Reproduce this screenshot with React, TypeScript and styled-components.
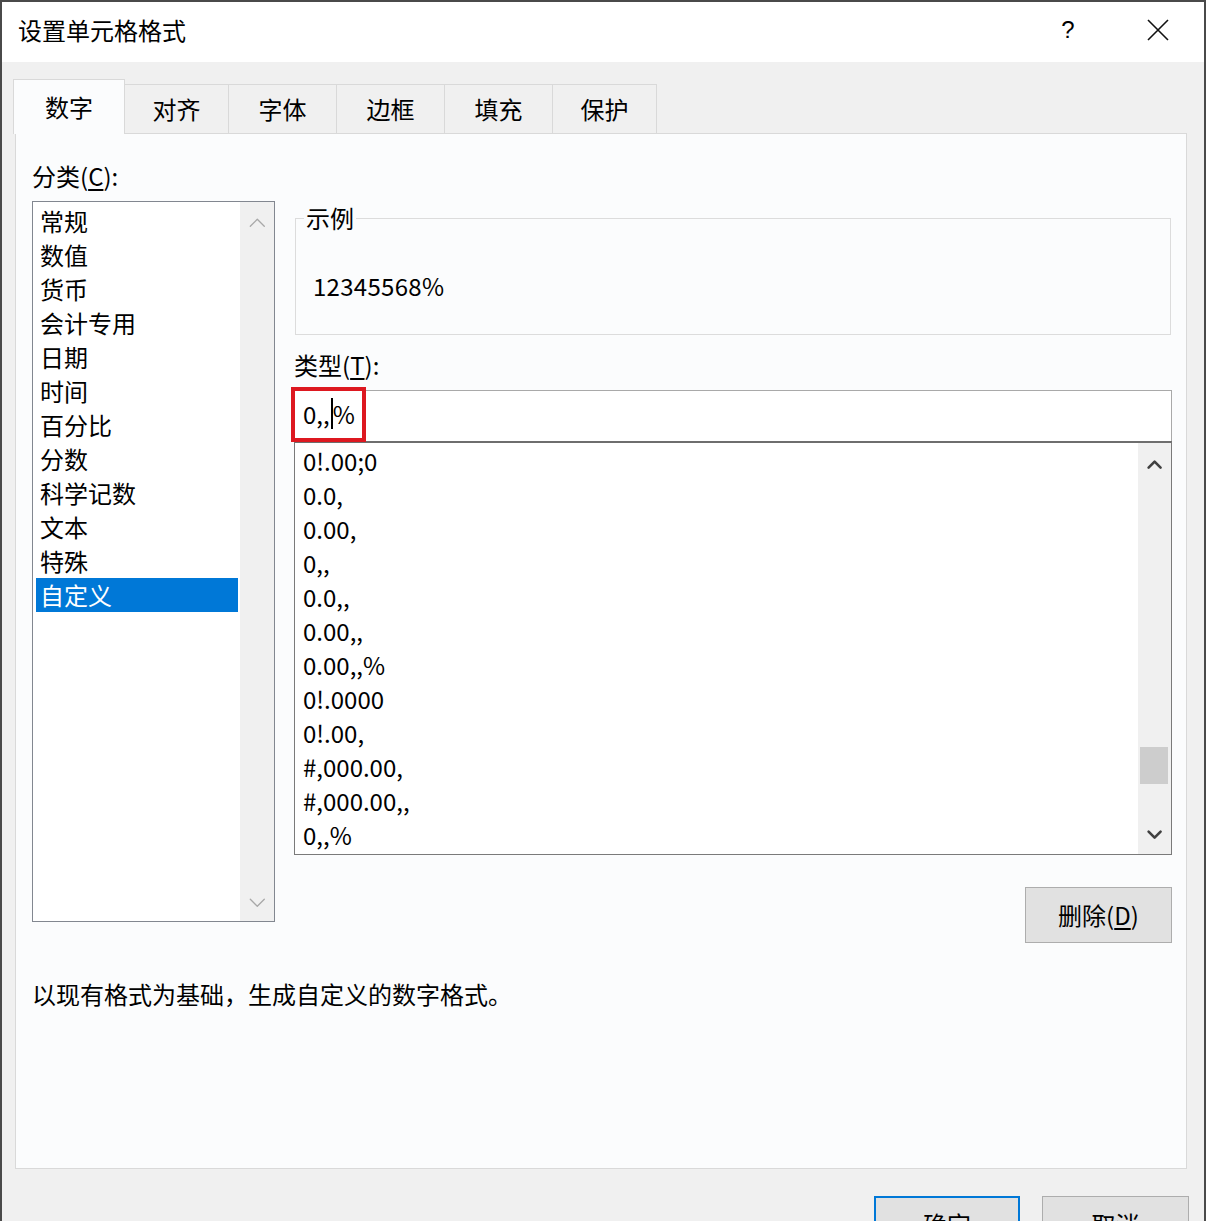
import React from "react";
import styled, { createGlobalStyle } from "styled-components";

const GlobalStyle = createGlobalStyle`
  html, body { margin: 0; padding: 0; background: #f0f0f0; }
  body { font-family: "Noto Sans CJK SC", "Noto Sans", sans-serif; }
  * { box-sizing: border-box; }
`;

const Window = styled.div`
  width: 1206px;
  height: 1221px;
  border: 2px solid #4a4a4a;
  border-bottom: none;
  background: #f0f0f0;
  overflow: hidden;
  display: flex;
  flex-direction: column;
  font-family: "Noto Sans CJK SC", "Noto Sans", sans-serif;
  font-size: 24px;
  color: #000;
`;

const TitleBar = styled.div`
  height: 60px;
  flex: none;
  background: #fff;
  display: flex;
  align-items: center;
  padding-left: 16px;
`;

const Title = styled.div`
  flex: 1;
  line-height: 30px;
  padding-bottom: 4px;
`;

const TitleButton = styled.div<{ $w: number }>`
  width: ${(p) => p.$w}px;
  height: 60px;
  display: flex;
  align-items: center;
  justify-content: center;
  padding-bottom: 4px;
  font-family: "Liberation Sans", sans-serif;
  font-size: 24px;
`;

const Body = styled.div`
  flex: 1;
  padding: 18px 17px 0 11px;
  display: flex;
  flex-direction: column;
`;

const TabRow = styled.div`
  display: flex;
  align-items: flex-end;
  height: 54px;
  margin-bottom: -1px;
  position: relative;
  z-index: 1;
`;

const Tab = styled.div<{ $w: number; $active?: boolean }>`
  width: ${(p) => p.$w}px;
  height: ${(p) => (p.$active ? 55 : 50)}px;
  margin-left: ${(p) => (p.$active ? 0 : -1)}px;
  border: 1px solid #d9d9d9;
  border-bottom: ${(p) => (p.$active ? "none" : "1px solid #d9d9d9")};
  background: ${(p) => (p.$active ? "#fbfcfd" : "#f0f0f0")};
  display: flex;
  align-items: center;
  justify-content: center;
  line-height: 30px;
  &:first-child { margin-left: 0; }
`;

const Panel = styled.div`
  width: 1172px;
  height: 1036px;
  margin-left: 2px;
  background: #fbfcfd;
  border: 1px solid #d9d9d9;
  padding: 25px 14px 0 16px;
  display: flex;
  flex-direction: column;
`;

const FieldLabel = styled.div<{ $mt?: number }>`
  line-height: 34px;
  height: 34px;
  margin-top: ${(p) => p.$mt ?? 0}px;
  margin-bottom: 8px;
  u { text-decoration: underline; text-underline-offset: 3px; }
`;

const MainGrid = styled.div`
  display: grid;
  grid-template-columns: 243px 1fr;
  column-gap: 19px;
`;

const CategoryList = styled.div`
  height: 721px;
  border: 1px solid #828790;
  background: #fff;
  display: flex;
`;

const CategoryItems = styled.div`
  flex: 1;
  padding: 2px 2px 0 3px;
`;

const Item = styled.div<{ $selected?: boolean }>`
  height: 34px;
  line-height: 34px;
  padding-left: 4px;
  white-space: nowrap;
  background: ${(p) => (p.$selected ? "#0078d7" : "transparent")};
  color: ${(p) => (p.$selected ? "#fff" : "#000")};
`;

const Scrollbar = styled.div<{ $w: number }>`
  width: ${(p) => p.$w}px;
  flex: none;
  background: #f0f0f0;
  display: flex;
  flex-direction: column;
`;

const ArrowBox = styled.div<{ $h: number }>`
  height: ${(p) => p.$h}px;
  flex: none;
  display: flex;
  align-items: center;
  justify-content: center;
`;

const Track = styled.div<{ $offset: number }>`
  flex: 1;
  padding-top: ${(p) => p.$offset}px;
`;

const Thumb = styled.div`
  height: 37px;
  margin: 0 3px 0 2px;
  background: #cdcdcd;
`;

const RightCol = styled.div`
  display: flex;
  flex-direction: column;
`;

const Sample = styled.fieldset`
  margin: 0 1px 0 1px;
  border: 1px solid #dcdcdc;
  padding: 0 8px 31px 8px;
  min-width: 0;
`;

const Legend = styled.legend`
  padding: 0 2px;
  line-height: 34px;
  height: 34px;
`;

const SampleValue = styled.div`
  margin-top: 34px;
  margin-left: 9px;
  line-height: 34px;
  height: 34px;
  letter-spacing: 0.3px;
`;

const InputWrap = styled.div`
  position: relative;
  height: 51px;
  border: 1px solid #a9a9a9;
  border-bottom: none;
  background: #fff;
  display: flex;
  align-items: center;
  padding: 0 0 6px 8px;
`;

const Caret = styled.span`
  display: inline-block;
  width: 2px;
  height: 31px;
  background: #000;
  vertical-align: middle;
  margin: 0 0 0 1px;
`;

const RedMark = styled.div`
  position: absolute;
  left: -4px;
  top: -4px;
  width: 75px;
  height: 55px;
  border: 4px solid #dd1820;
`;

const FormatList = styled.div`
  height: 414px;
  border: 1px solid #7a7a7a;
  border-top: 2px solid #6e6e6e;
  background: #fff;
  display: flex;
`;

const FormatItems = styled.div`
  flex: 1;
  padding: 1px 0 0 4px;
`;

const DeleteRow = styled.div`
  display: flex;
  justify-content: flex-end;
  margin-top: 32px;
`;

const Button = styled.div<{ $default?: boolean; $w: number }>`
  width: ${(p) => p.$w}px;
  height: 56px;
  flex: none;
  background: #e1e1e1;
  border: ${(p) => (p.$default ? "2px solid #0078d7" : "1px solid #adadad")};
  display: flex;
  align-items: center;
  justify-content: center;
  line-height: 30px;
  u { text-decoration: underline; text-underline-offset: 3px; }
`;

const Description = styled.div`
  margin-top: 34px;
  line-height: 34px;
`;

const FooterRow = styled.div`
  display: flex;
  justify-content: flex-end;
  gap: 22px;
  margin-top: 27px;
  width: 1176px;
`;

const Chevron = ({ up, color, w, h, sw }: { up: boolean; color: string; w: number; h: number; sw: number }) => (
  <svg width={w + sw * 2} height={h + sw * 2} viewBox={`${-sw} ${-sw} ${w + sw * 2} ${h + sw * 2}`}>
    <polyline
      points={up ? `0,${h} ${w / 2},0 ${w},${h}` : `0,0 ${w / 2},${h} ${w},0`}
      fill="none"
      stroke={color}
      strokeWidth={sw}
      strokeLinecap="round"
      strokeLinejoin="round"
    />
  </svg>
);

const categories = ["常规", "数值", "货币", "会计专用", "日期", "时间", "百分比", "分数", "科学记数", "文本", "特殊", "自定义"];
const formats = ["0!.00;0", "0.0,", "0.00,", "0,,", "0.0,,", "0.00,,", "0.00,,%", "0!.0000", "0!.00,", "#,000.00,", "#,000.00,,", "0,,%"];
const tabs: [string, number][] = [["数字", 112], ["对齐", 105], ["字体", 109], ["边框", 109], ["填充", 109], ["保护", 105]];

export default function App() {
  return (
    <>
      <GlobalStyle />
      <Window>
        <TitleBar>
          <Title>设置单元格格式</Title>
          <TitleButton $w={88}>?</TitleButton>
          <TitleButton $w={92}>
            <svg width="24" height="24" viewBox="0 0 24 24">
              <path d="M2 2 L22 22 M22 2 L2 22" stroke="#111" strokeWidth="1.6" fill="none" />
            </svg>
          </TitleButton>
        </TitleBar>
        <Body>
          <TabRow>
            {tabs.map(([t, w], i) => (
              <Tab key={t} $w={w} $active={i === 0}>
                {t}
              </Tab>
            ))}
          </TabRow>
          <Panel>
            <FieldLabel>
              分类(<u>C</u>):
            </FieldLabel>
            <MainGrid>
              <CategoryList>
                <CategoryItems>
                  {categories.map((c) => (
                    <Item key={c} $selected={c === "自定义"}>
                      {c}
                    </Item>
                  ))}
                </CategoryItems>
                <Scrollbar $w={34}>
                  <ArrowBox $h={42}>
                    <Chevron up color="#a8a8a8" w={14} h={7} sw={1.3} />
                  </ArrowBox>
                  <Track $offset={0} />
                  <ArrowBox $h={36}>
                    <Chevron up={false} color="#a8a8a8" w={14} h={7} sw={1.3} />
                  </ArrowBox>
                </Scrollbar>
              </CategoryList>
              <RightCol>
                <Sample>
                  <Legend>示例</Legend>
                  <SampleValue>12345568%</SampleValue>
                </Sample>
                <FieldLabel $mt={13}>
                  类型(<u>T</u>):
                </FieldLabel>
                <InputWrap>
                  <span>0,,</span>
                  <Caret />
                  <span>%</span>
                  <RedMark />
                </InputWrap>
                <FormatList>
                  <FormatItems>
                    {formats.map((f) => (
                      <Item key={f}>{f}</Item>
                    ))}
                  </FormatItems>
                  <Scrollbar $w={33}>
                    <ArrowBox $h={44}>
                      <Chevron up color="#404040" w={12} h={6} sw={2.6} />
                    </ArrowBox>
                    <Track $offset={260}>
                      <Thumb />
                    </Track>
                    <ArrowBox $h={38}>
                      <Chevron up={false} color="#404040" w={12} h={6} sw={2.6} />
                    </ArrowBox>
                  </Scrollbar>
                </FormatList>
                <DeleteRow>
                  <Button $w={147}>
                    删除(<u>D</u>)
                  </Button>
                </DeleteRow>
              </RightCol>
            </MainGrid>
            <Description>以现有格式为基础，生成自定义的数字格式。</Description>
          </Panel>
          <FooterRow>
            <Button $w={146} $default>
              确定
            </Button>
            <Button $w={147}>取消</Button>
          </FooterRow>
        </Body>
      </Window>
    </>
  );
}
